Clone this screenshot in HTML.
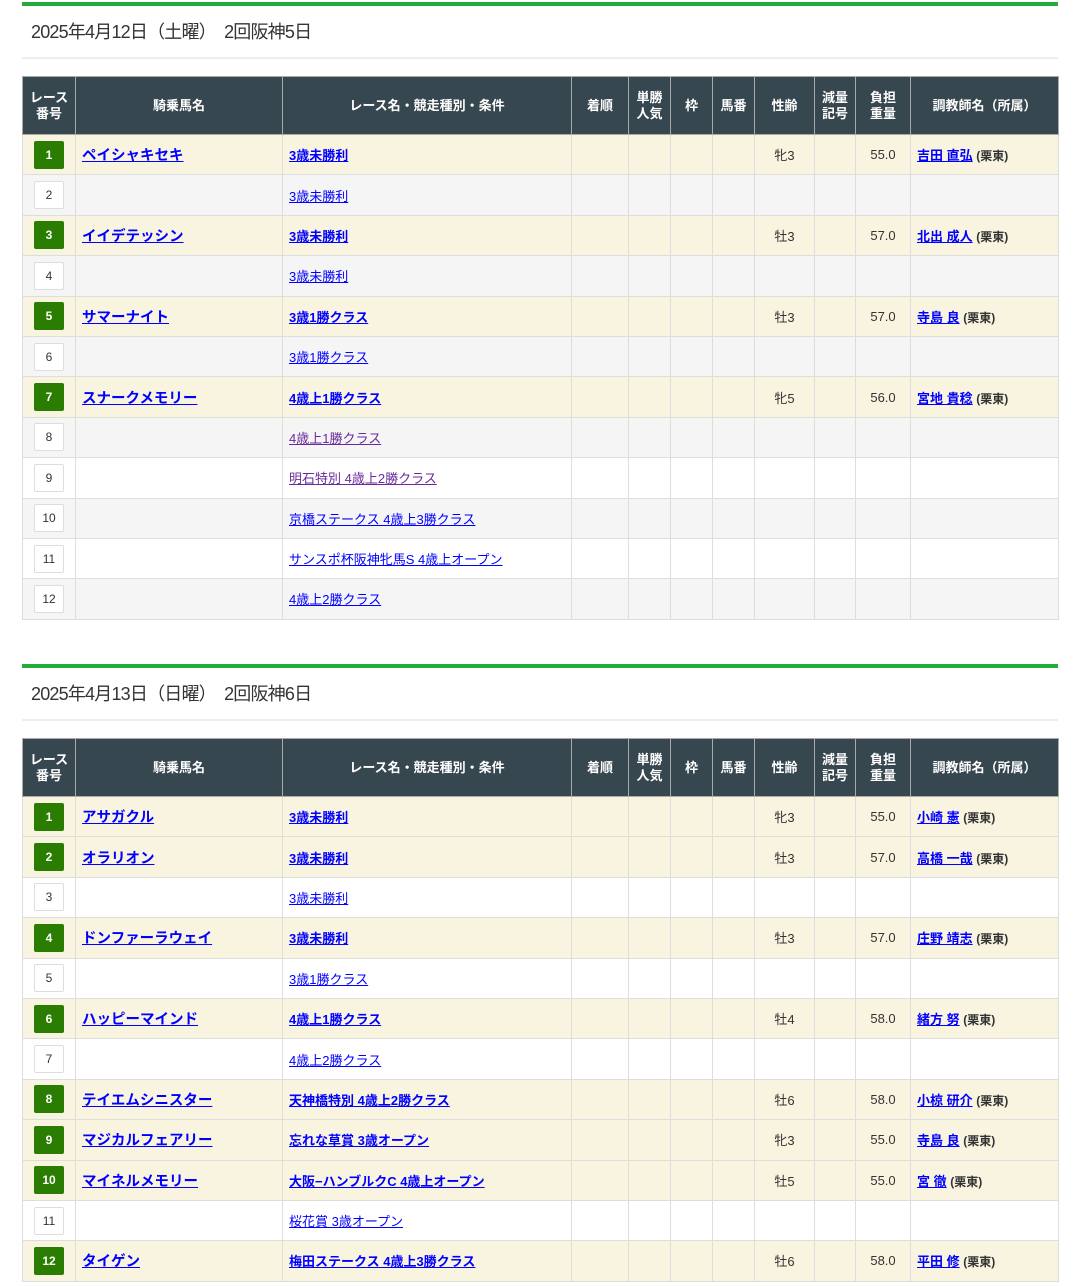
<!DOCTYPE html>
<html><head><meta charset="utf-8"><style>
*{box-sizing:border-box}
body{margin:0;background:#fff;font-family:"Liberation Sans","Noto Sans CJK JP",sans-serif;color:#333;width:1080px;height:1286px;overflow:hidden}
.sec{position:absolute;left:22px;width:1036px}
.bar{height:4px;background:#22aa3a}
.title{height:53px;border-bottom:2px solid #eee;font-size:18px;line-height:53px;padding-left:9px;color:#333;letter-spacing:-0.8px}
table{border-collapse:collapse;table-layout:fixed;width:1036px;margin-top:17px;font-size:13px}
th{background:#37474f;color:#fff;font-weight:bold;height:58px;border:1px solid #aaa;font-size:13px;line-height:16px;text-align:center;padding:0}
td{height:40.4px;border:1px solid #ddd;padding:0 6px;text-align:center;white-space:nowrap}
td.l{text-align:left}
td.hn a{font-size:14.5px}
tr.h td{background:#f8f4e0}
tr.g td{background:#f5f5f5}
tr.w td{background:#fff}
a{color:#00f;text-decoration:underline}
a.v{color:#6a2a9a}
tr.h a{font-weight:bold}
.n{display:inline-block;width:30px;height:28px;line-height:26px;border:1px solid #ddd;background:#fff;border-radius:2px;font-size:12px;color:#333}
tr.h .n{background:#2a7d00;color:#fff;border-color:#2a7d00;font-weight:bold}
.s{font-size:12px;font-weight:bold}
</style></head><body>

<div class="sec" style="top:2px">
<div class="bar"></div>
<div class="title">2025年4月12日（土曜）　2回阪神5日</div>
<table>
<colgroup><col style="width:53px"><col style="width:207px"><col style="width:289px"><col style="width:57px"><col style="width:42px"><col style="width:42px"><col style="width:42px"><col style="width:60px"><col style="width:41px"><col style="width:55px"><col style="width:148px"></colgroup>
<tr><th>レース<br>番号</th><th>騎乗馬名</th><th>レース名・競走種別・条件</th><th>着順</th><th>単勝<br>人気</th><th>枠</th><th>馬番</th><th>性齢</th><th>減量<br>記号</th><th>負担<br>重量</th><th>調教師名（所属）</th></tr>
<tr class="h"><td><span class="n">1</span></td><td class="l hn"><a>ペイシャキセキ</a></td><td class="l"><a>3歳未勝利</a></td><td></td><td></td><td></td><td></td><td>牝3</td><td></td><td>55.0</td><td class="l"><a>吉田 直弘</a> <span class="s">(栗東)</span></td></tr>
<tr class="g"><td><span class="n">2</span></td><td></td><td class="l"><a>3歳未勝利</a></td><td></td><td></td><td></td><td></td><td></td><td></td><td></td><td></td></tr>
<tr class="h"><td><span class="n">3</span></td><td class="l hn"><a>イイデテッシン</a></td><td class="l"><a>3歳未勝利</a></td><td></td><td></td><td></td><td></td><td>牡3</td><td></td><td>57.0</td><td class="l"><a>北出 成人</a> <span class="s">(栗東)</span></td></tr>
<tr class="g"><td><span class="n">4</span></td><td></td><td class="l"><a>3歳未勝利</a></td><td></td><td></td><td></td><td></td><td></td><td></td><td></td><td></td></tr>
<tr class="h"><td><span class="n">5</span></td><td class="l hn"><a>サマーナイト</a></td><td class="l"><a>3歳1勝クラス</a></td><td></td><td></td><td></td><td></td><td>牡3</td><td></td><td>57.0</td><td class="l"><a>寺島 良</a> <span class="s">(栗東)</span></td></tr>
<tr class="g"><td><span class="n">6</span></td><td></td><td class="l"><a>3歳1勝クラス</a></td><td></td><td></td><td></td><td></td><td></td><td></td><td></td><td></td></tr>
<tr class="h"><td><span class="n">7</span></td><td class="l hn"><a>スナークメモリー</a></td><td class="l"><a>4歳上1勝クラス</a></td><td></td><td></td><td></td><td></td><td>牝5</td><td></td><td>56.0</td><td class="l"><a>宮地 貴稔</a> <span class="s">(栗東)</span></td></tr>
<tr class="g"><td><span class="n">8</span></td><td></td><td class="l"><a class="v">4歳上1勝クラス</a></td><td></td><td></td><td></td><td></td><td></td><td></td><td></td><td></td></tr>
<tr class="w"><td><span class="n">9</span></td><td></td><td class="l"><a class="v">明石特別 4歳上2勝クラス</a></td><td></td><td></td><td></td><td></td><td></td><td></td><td></td><td></td></tr>
<tr class="g"><td><span class="n">10</span></td><td></td><td class="l"><a>京橋ステークス 4歳上3勝クラス</a></td><td></td><td></td><td></td><td></td><td></td><td></td><td></td><td></td></tr>
<tr class="w"><td><span class="n">11</span></td><td></td><td class="l"><a>サンスポ杯阪神牝馬S 4歳上オープン</a></td><td></td><td></td><td></td><td></td><td></td><td></td><td></td><td></td></tr>
<tr class="g"><td><span class="n">12</span></td><td></td><td class="l"><a>4歳上2勝クラス</a></td><td></td><td></td><td></td><td></td><td></td><td></td><td></td><td></td></tr>
</table>
</div>

<div class="sec" style="top:664px">
<div class="bar"></div>
<div class="title">2025年4月13日（日曜）　2回阪神6日</div>
<table>
<colgroup><col style="width:53px"><col style="width:207px"><col style="width:289px"><col style="width:57px"><col style="width:42px"><col style="width:42px"><col style="width:42px"><col style="width:60px"><col style="width:41px"><col style="width:55px"><col style="width:148px"></colgroup>
<tr><th>レース<br>番号</th><th>騎乗馬名</th><th>レース名・競走種別・条件</th><th>着順</th><th>単勝<br>人気</th><th>枠</th><th>馬番</th><th>性齢</th><th>減量<br>記号</th><th>負担<br>重量</th><th>調教師名（所属）</th></tr>
<tr class="h"><td><span class="n">1</span></td><td class="l hn"><a>アサガクル</a></td><td class="l"><a>3歳未勝利</a></td><td></td><td></td><td></td><td></td><td>牝3</td><td></td><td>55.0</td><td class="l"><a>小崎 憲</a> <span class="s">(栗東)</span></td></tr>
<tr class="h"><td><span class="n">2</span></td><td class="l hn"><a>オラリオン</a></td><td class="l"><a>3歳未勝利</a></td><td></td><td></td><td></td><td></td><td>牡3</td><td></td><td>57.0</td><td class="l"><a>高橋 一哉</a> <span class="s">(栗東)</span></td></tr>
<tr class="w"><td><span class="n">3</span></td><td></td><td class="l"><a>3歳未勝利</a></td><td></td><td></td><td></td><td></td><td></td><td></td><td></td><td></td></tr>
<tr class="h"><td><span class="n">4</span></td><td class="l hn"><a>ドンファーラウェイ</a></td><td class="l"><a>3歳未勝利</a></td><td></td><td></td><td></td><td></td><td>牡3</td><td></td><td>57.0</td><td class="l"><a>庄野 靖志</a> <span class="s">(栗東)</span></td></tr>
<tr class="w"><td><span class="n">5</span></td><td></td><td class="l"><a>3歳1勝クラス</a></td><td></td><td></td><td></td><td></td><td></td><td></td><td></td><td></td></tr>
<tr class="h"><td><span class="n">6</span></td><td class="l hn"><a>ハッピーマインド</a></td><td class="l"><a>4歳上1勝クラス</a></td><td></td><td></td><td></td><td></td><td>牡4</td><td></td><td>58.0</td><td class="l"><a>緒方 努</a> <span class="s">(栗東)</span></td></tr>
<tr class="w"><td><span class="n">7</span></td><td></td><td class="l"><a>4歳上2勝クラス</a></td><td></td><td></td><td></td><td></td><td></td><td></td><td></td><td></td></tr>
<tr class="h"><td><span class="n">8</span></td><td class="l hn"><a>テイエムシニスター</a></td><td class="l"><a>天神橋特別 4歳上2勝クラス</a></td><td></td><td></td><td></td><td></td><td>牡6</td><td></td><td>58.0</td><td class="l"><a>小椋 研介</a> <span class="s">(栗東)</span></td></tr>
<tr class="h"><td><span class="n">9</span></td><td class="l hn"><a>マジカルフェアリー</a></td><td class="l"><a>忘れな草賞 3歳オープン</a></td><td></td><td></td><td></td><td></td><td>牝3</td><td></td><td>55.0</td><td class="l"><a>寺島 良</a> <span class="s">(栗東)</span></td></tr>
<tr class="h"><td><span class="n">10</span></td><td class="l hn"><a>マイネルメモリー</a></td><td class="l"><a>大阪−ハンブルクC 4歳上オープン</a></td><td></td><td></td><td></td><td></td><td>牡5</td><td></td><td>55.0</td><td class="l"><a>宮 徹</a> <span class="s">(栗東)</span></td></tr>
<tr class="w"><td><span class="n">11</span></td><td></td><td class="l"><a>桜花賞 3歳オープン</a></td><td></td><td></td><td></td><td></td><td></td><td></td><td></td><td></td></tr>
<tr class="h"><td><span class="n">12</span></td><td class="l hn"><a>タイゲン</a></td><td class="l"><a>梅田ステークス 4歳上3勝クラス</a></td><td></td><td></td><td></td><td></td><td>牡6</td><td></td><td>58.0</td><td class="l"><a>平田 修</a> <span class="s">(栗東)</span></td></tr>
</table>
</div>
</body></html>
